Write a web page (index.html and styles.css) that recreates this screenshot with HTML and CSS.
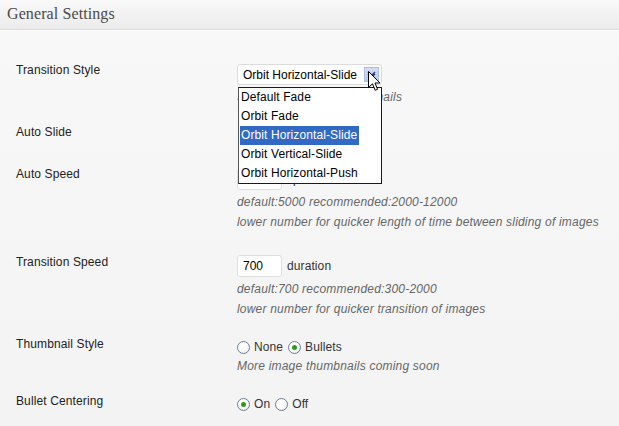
FILE: index.html
```html
<!DOCTYPE html>
<html>
<head>
<meta charset="utf-8">
<link rel="stylesheet" href="styles.css">
</head>
<body>
<div class="postbox">
  <div class="hndle"><h3 class="title">General Settings</h3></div>
  <div class="form">
    <div class="row row-1">
      <div class="label">Transition Style</div>
      <div class="field">
        <div class="select-wrap">
          <div class="select">
            <span class="select-text">Orbit Horizontal-Slide</span>
            <span class="select-btn">
              <svg width="9" height="7" viewBox="0 0 9 7"><path d="M1 1 L4.5 4.5 L8 1 M1 3 L4.5 6.5 L8 3" fill="none" stroke="#2a3f6e" stroke-width="1.3"/></svg>
            </span>
          </div>
          <ul class="dropdown">
            <li class="opt">Default Fade</li>
            <li class="opt">Orbit Fade</li>
            <li class="opt"><span class="opt-sel">Orbit Horizontal-Slide</span></li>
            <li class="opt">Orbit Vertical-Slide</li>
            <li class="opt">Orbit Horizontal-Push</li>
          </ul>
          <svg class="cursor" width="13" height="21" viewBox="0 0 13 21"><path d="M0.5 0.5 L0.5 16.5 L4.5 12.8 L7.2 19.3 L9.6 18.3 L7 12 L12 12 Z" fill="#fff" stroke="#000" stroke-width="1" stroke-linejoin="miter"/></svg>
        </div>
        <p class="desc desc-first">Slide is best for all thumbnails</p>
      </div>
    </div>

    <div class="row row-2">
      <div class="label">Auto Slide</div>
      <div class="field">
        <div class="spacer"></div>
      </div>
    </div>

    <div class="row row-3">
      <div class="label">Auto Speed</div>
      <div class="field">
        <div class="inline">
          <span class="input input-hidden"></span><span class="unit">speed</span>
        </div>
        <p class="desc">default:5000 recommended:2000-12000</p>
        <p class="desc">lower number for quicker length of time between sliding of images</p>
      </div>
    </div>

    <div class="row row-4">
      <div class="label">Transition Speed</div>
      <div class="field">
        <div class="inline">
          <span class="input">700</span><span class="unit">duration</span>
        </div>
        <p class="desc">default:700 recommended:300-2000</p>
        <p class="desc">lower number for quicker transition of images</p>
      </div>
    </div>

    <div class="row row-5">
      <div class="label">Thumbnail Style</div>
      <div class="field">
        <div class="radios">
          <label class="radio-item"><span class="radio"></span>None</label>
          <label class="radio-item"><span class="radio checked"></span>Bullets</label>
        </div>
        <p class="desc">More image thumbnails coming soon</p>
      </div>
    </div>

    <div class="row row-6">
      <div class="label">Bullet Centering</div>
      <div class="field">
        <div class="radios">
          <label class="radio-item"><span class="radio checked"></span>On</label>
          <label class="radio-item"><span class="radio"></span>Off</label>
        </div>
      </div>
    </div>
  </div>
</div>
</body>
</html>
```

FILE: styles.css
```css
html, body {
  margin: 0;
  padding: 0;
}
body {
  width: 619px;
  height: 426px;
  overflow: hidden;
  background: linear-gradient(#f8f8f8, #f3f3f3);
  font-family: "Liberation Sans", Arial, sans-serif;
  font-size: 12px;
  color: #333;
}
.postbox {
  height: 426px;
}
.hndle {
  height: 29px;
  background: linear-gradient(#f9f9f9, #ebebeb);
  border-bottom: 1px solid #dadada;
  box-shadow: 0 1px 0 #ffffff;
}
.title {
  margin: 0;
  padding: 5px 0 0 7px;
  font-family: "Liberation Serif", "Times New Roman", serif;
  font-weight: normal;
  font-size: 16px;
  line-height: 18px;
  letter-spacing: 0.1px;
  color: #4a4a4a;
}
.form {
  padding: 34px 0 0 16px;
}
.row {
  display: grid;
  grid-template-columns: 221px 1fr;
  align-items: start;
}
.row-1 { padding-bottom: 19px; }
.row-2 { padding-bottom: 20px; }
.row-3 { padding-bottom: 23px; }
.row-4 { padding-bottom: 19px; }
.row-5 { padding-bottom: 19px; }
.row-4 .label { padding-top: 1px; }
.label {
  line-height: 12px;
  color: #222;
  letter-spacing: 0.12px;
}
.field {
  position: relative;
}
.spacer {
  height: 22px;
}
.desc {
  margin: 0;
  line-height: 20px;
  font-style: italic;
  color: #666;
  letter-spacing: 0.2px;
}
.inline + .desc {
  margin-top: 2px;
}
.desc-first {
  margin-top: 2px;
}
.select-wrap {
  position: relative;
  width: 145px;
}
.select {
  box-sizing: border-box;
  height: 21px;
  width: 145px;
  background: #fff;
  border: 1px solid #dcdcdc;
  border-radius: 3px;
  display: flex;
  align-items: center;
  justify-content: space-between;
  padding: 0 2px 0 5px;
  color: #000;
}
.select-btn {
  width: 15px;
  height: 15px;
  box-sizing: border-box;
  background: linear-gradient(#d3def4, #b7c9ec);
  border: 1px solid #a9bde6;
  display: flex;
  align-items: center;
  justify-content: center;
}
.dropdown {
  position: absolute;
  left: 1px;
  top: 23px;
  width: 144px;
  box-sizing: border-box;
  margin: 0;
  padding: 0;
  list-style: none;
  background: #fff;
  border: 1px solid #1a1a1a;
  border-left-color: #555;
  z-index: 5;
}
.opt {
  height: 19px;
  line-height: 19px;
  padding-left: 2px;
  color: #000;
  white-space: nowrap;
  letter-spacing: 0.1px;
}
.opt-sel {
  display: inline-block;
  background: #316ac5;
  color: #fff;
  margin-left: -1px;
  padding: 0 2px 0 1px;
}
.cursor {
  position: absolute;
  left: 131px;
  top: 7px;
  z-index: 6;
}
.inline {
  display: flex;
  align-items: center;
  gap: 5px;
  height: 22px;
}
.input {
  box-sizing: border-box;
  width: 45px;
  height: 22px;
  line-height: 20px;
  background: #fff;
  border: 1px solid #dfdfdf;
  border-radius: 3px;
  padding: 0 5px;
  color: #000;
}
.unit {
  color: #333;
  letter-spacing: 0.1px;
}
.radios {
  display: flex;
  align-items: center;
  gap: 5px;
  height: 18px;
}
.radio-item {
  display: flex;
  align-items: center;
  gap: 4px;
  color: #333;
  letter-spacing: 0.1px;
}
.radio {
  box-sizing: border-box;
  width: 13px;
  height: 13px;
  border-radius: 50%;
  border: 1px solid #6d7f99;
  background: radial-gradient(circle at 40% 35%, #ffffff 40%, #dde1e6 100%);
  display: flex;
  align-items: center;
  justify-content: center;
}
.radio.checked::after {
  content: "";
  width: 5px;
  height: 5px;
  border-radius: 50%;
  background: #2f9a1f;
}
```
